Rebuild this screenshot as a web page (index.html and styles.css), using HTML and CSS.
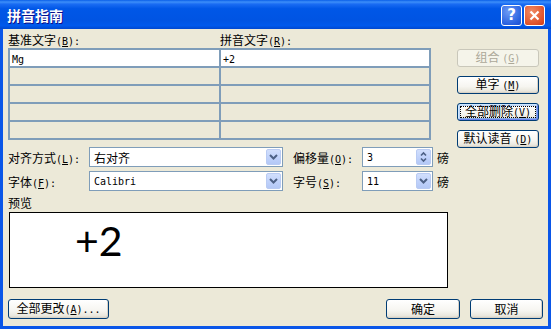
FILE: index.html
```html
<!DOCTYPE html>
<html lang="zh-CN">
<head>
    <meta charset="UTF-8">
    <title>拼音指南</title>
    <link rel="stylesheet" href="styles.css">
</head>
<body>

<div class="window">
    <div class="titlebar">
        <span class="title">拼音指南</span>
        <div class="caption-buttons">
            <span class="cap-btn help">?</span>
            <span class="cap-btn close">
                <svg width="11" height="11" viewBox="0 0 11 11"><path d="M1.5 1.5 L9.5 9.5 M9.5 1.5 L1.5 9.5" stroke="#fff" stroke-width="2.2" fill="none"/></svg>
            </span>
        </div>
    </div>

    <div class="client">
        <div class="top">
            <div class="pairs">
                <div class="pair-labels">
                    <span class="col-label">基准文字<span class="k">(<u>B</u>):</span></span>
                    <span>拼音文字<span class="k">(<u>R</u>):</span></span>
                </div>
                <div class="pair-grid">
                    <div class="cell filled"><span class="mono">Mg</span></div>
                    <div class="cell filled"><span class="mono">+2</span></div>
                    <div class="cell"></div>
                    <div class="cell"></div>
                    <div class="cell"></div>
                    <div class="cell"></div>
                    <div class="cell"></div>
                    <div class="cell"></div>
                    <div class="cell"></div>
                    <div class="cell"></div>
                </div>
            </div>
            <div class="side-buttons">
                <button class="btn disabled">组合 <span class="k">(<u>G</u>)</span></button>
                <button class="btn">单字 <span class="k">(<u>M</u>)</span></button>
                <button class="btn focused">全部删除<span class="k">(<u>V</u>)</span></button>
                <button class="btn">默认读音 <span class="k">(<u>D</u>)</span></button>
            </div>
        </div>

        <div class="options">
            <div class="opt-row">
                <span class="opt-label">对齐方式<span class="k">(<u>L</u>):</span></span>
                <div class="combo wide">
                    <span class="combo-text">右对齐</span>
                    <span class="drop">
                        <svg width="9" height="6" viewBox="0 0 9 6"><path d="M1 1 L4.5 4.5 L8 1" stroke="#4d6185" stroke-width="2" fill="none"/></svg>
                    </span>
                </div>
                <span class="opt-label small">偏移量<span class="k">(<u>O</u>):</span></span>
                <div class="combo narrow">
                    <span class="combo-text mono">3</span>
                    <span class="drop spin">
                        <svg width="7" height="12" viewBox="0 0 7 12"><path d="M1 4.5 L3.5 2 L6 4.5 M1 7.5 L3.5 10 L6 7.5" stroke="#4d6185" stroke-width="1.6" fill="none"/></svg>
                    </span>
                </div>
                <span class="unit">磅</span>
            </div>
            <div class="opt-row">
                <span class="opt-label">字体<span class="k">(<u>F</u>):</span></span>
                <div class="combo wide">
                    <span class="combo-text mono">Calibri</span>
                    <span class="drop">
                        <svg width="9" height="6" viewBox="0 0 9 6"><path d="M1 1 L4.5 4.5 L8 1" stroke="#4d6185" stroke-width="2" fill="none"/></svg>
                    </span>
                </div>
                <span class="opt-label small">字号<span class="k">(<u>S</u>):</span></span>
                <div class="combo narrow">
                    <span class="combo-text mono">11</span>
                    <span class="drop">
                        <svg width="9" height="6" viewBox="0 0 9 6"><path d="M1 1 L4.5 4.5 L8 1" stroke="#4d6185" stroke-width="2" fill="none"/></svg>
                    </span>
                </div>
                <span class="unit">磅</span>
            </div>
        </div>

        <div class="preview-label">预览</div>
        <div class="preview"><span class="preview-text">+2</span></div>

        <div class="bottom">
            <button class="btn all-change">全部更改<span class="k">(<u>A</u>)...</span></button>
            <div class="spacer"></div>
            <button class="btn ok">确定</button>
            <button class="btn cancel">取消</button>
        </div>
    </div>
</div>

</body>
</html>
```

FILE: styles.css
```css
body {
    margin: 0;
    background-color: #ece9d8;
    font-family: "Noto Sans CJK SC", sans-serif;
    font-size: 12px;
    color: #000;
}
.window {
    width: 551px;
    height: 329px;
    display: flex;
    flex-direction: column;
    background-color: #0a56e8;
}
.titlebar {
    height: 29px;
    flex-shrink: 0;
    display: flex;
    align-items: center;
    justify-content: space-between;
    padding: 0 6px 0 7px;
    background: linear-gradient(to bottom, #0a5fe8 0%, #3d8ff9 7%, #1a6cf3 14%, #0057e7 30%, #0054e3 70%, #0059ec 88%, #0048d0 100%);
}
.title {
    color: #fff;
    font-weight: bold;
    font-size: 14px;
    text-shadow: 1px 1px #0f1089;
}
.caption-buttons {
    display: flex;
    gap: 2px;
    margin-top: 1px;
}
.cap-btn {
    width: 19px;
    height: 19px;
    border: 1px solid #fff;
    border-radius: 3px;
    display: flex;
    align-items: center;
    justify-content: center;
    color: #fff;
}
.help {
    background: radial-gradient(circle at 35% 30%, #6d9cf5, #2a62e0 70%, #1d4fcf);
    font-family: "DejaVu Sans", sans-serif;
    font-weight: bold;
    font-size: 15px;
}
.close {
    background: radial-gradient(circle at 35% 30%, #f08a64, #e0522a 70%, #c93c18);
}
.client {
    flex: 1;
    margin: 0 3px 3px;
    background-color: #ece9d8;
    padding: 3px 0 0 5px;
    display: flex;
    flex-direction: column;
}
.k {
    font-family: "DejaVu Sans Mono", monospace;
    font-size: 10px;
}
.mono {
    font-family: "DejaVu Sans Mono", monospace;
    font-size: 10px;
}

/* base text / phonetic text pairs */
.top {
    display: flex;
    align-items: flex-start;
    gap: 26px;
    height: 108px;
}
.pairs {
    width: 423px;
}
.pair-labels {
    display: flex;
    height: 16px;
    line-height: 16px;
}
.col-label {
    width: 212px;
}
.pair-grid {
    display: grid;
    grid-template-columns: 209px 208px;
    grid-auto-rows: 16px;
    gap: 2px;
    padding: 2px;
    background-color: #7f9db9;
}
.cell {
    background-color: #ece9d8;
    padding-left: 2px;
    line-height: 16px;
}
.cell.filled {
    background-color: #fff;
}
.side-buttons {
    display: flex;
    flex-direction: column;
    gap: 9px;
    padding-top: 17px;
}
.side-buttons .btn {
    width: 82px;
    height: 18px;
}

/* buttons */
.btn {
    position: relative;
    font-family: "Noto Sans CJK SC", sans-serif;
    font-size: 12px;
    color: #000;
    padding: 0;
    border: 1px solid #003c74;
    border-radius: 3px;
    background: linear-gradient(to bottom, #ffffff 0%, #f6f5f0 60%, #e9e7dd 88%, #d6d0c5 100%);
    box-shadow: inset -1px -1px #d8d2c6;
    line-height: 14px;
}
.btn.disabled {
    color: #aca899;
    border-color: #c9c7ba;
    background: #f5f4ea;
    box-shadow: none;
}
.btn.focused {
    box-shadow: inset 1px 1px #cee7ff, inset -1px -1px #6982ee, inset 2px 2px #bcd4f6, inset -2px -2px #89ade4;
}
.btn.focused::after {
    content: "";
    position: absolute;
    top: 2px;
    left: 2px;
    right: 2px;
    bottom: 2px;
    border: 1px dotted #000;
}

/* alignment / font rows */
.options {
    margin-top: 7px;
    display: flex;
    flex-direction: column;
    gap: 4px;
}
.opt-row {
    display: flex;
    align-items: center;
    height: 20px;
}
.opt-label {
    width: 81px;
}
.opt-label.small {
    width: 69px;
    margin-left: 10px;
}
.combo {
    height: 20px;
    box-sizing: border-box;
    border: 1px solid #7f9db9;
    background-color: #fff;
    display: flex;
    align-items: center;
    justify-content: space-between;
}
.combo.wide {
    width: 194px;
}
.combo.narrow {
    width: 71px;
}
.combo-text {
    padding-left: 4px;
}
.drop {
    width: 15px;
    height: 16px;
    margin-right: 1px;
    box-sizing: border-box;
    border: 1px solid #b9cbf3;
    border-radius: 2px;
    background: linear-gradient(to bottom, #d2dffc 0%, #c1d3fb 50%, #b4c8f6 100%);
    display: flex;
    align-items: center;
    justify-content: center;
}
.unit {
    margin-left: 4px;
}

/* preview */
.preview-label {
    margin-top: 4px;
    height: 16px;
    line-height: 16px;
}
.preview {
    margin: 1px 0 0 1px;
    width: 439px;
    height: 76px;
    box-sizing: border-box;
    border: 1px solid #000;
    background-color: #fff;
    padding: 7px 0 0 65px;
}
.preview-text {
    display: block;
    font-family: Lato, sans-serif;
    font-size: 41px;
    line-height: 42px;
}

/* bottom buttons */
.bottom {
    margin-top: 11px;
    display: flex;
    padding-right: 5px;
}
.bottom .btn {
    height: 20px;
}
.all-change {
    width: 101px;
}
.spacer {
    flex: 1;
}
.ok {
    width: 74px;
}
.cancel {
    width: 73px;
    margin-left: 10px;
}
```
